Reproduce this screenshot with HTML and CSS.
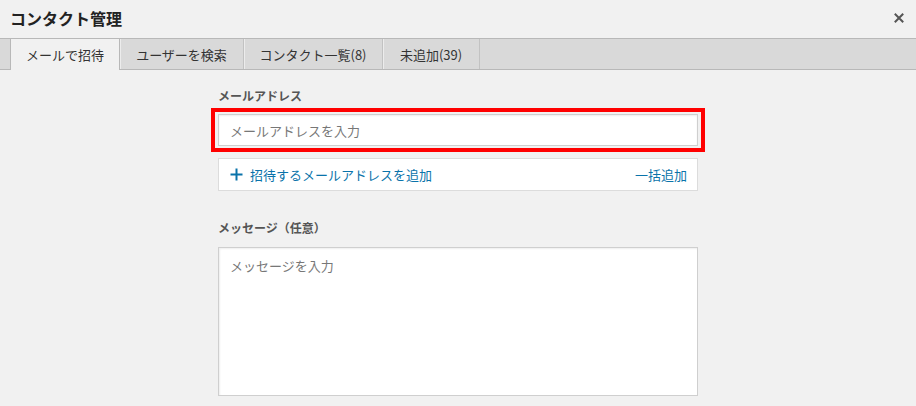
FILE: index.html
```html
<!DOCTYPE html>
<html lang="ja">
<head>
<meta charset="utf-8">
<title>コンタクト管理</title>
<link rel="stylesheet" href="styles.css">
</head>
<body>
<div class="modal">
  <header class="modal-header">
    <h1 class="modal-title">コンタクト管理</h1>
    <button class="close-btn" aria-label="閉じる">
      <svg width="10" height="10" viewBox="0 0 10 10"><path d="M1.5 1.5 L8.5 8.5 M8.5 1.5 L1.5 8.5" stroke="#555" stroke-width="2" stroke-linecap="square"/></svg>
    </button>
  </header>
  <nav class="tabs">
    <div class="tab active">メールで招待</div>
    <div class="tab">ユーザーを検索</div>
    <div class="tab">コンタクト一覧(8)</div>
    <div class="tab">未追加(39)</div>
  </nav>
  <main class="content">
    <div class="form">
      <label class="field-label">メールアドレス</label>
      <div class="highlight">
        <div class="text-input placeholder">メールアドレスを入力</div>
      </div>
      <div class="add-row">
        <span class="add-link">
          <svg class="plus" width="13" height="13" viewBox="0 0 13 13"><path d="M6.5 0.5 V12.5 M0.5 6.5 H12.5" stroke="#0a73aa" stroke-width="2"/></svg>
          招待するメールアドレスを追加
        </span>
        <span class="bulk-link">一括追加</span>
      </div>
      <label class="field-label second">メッセージ（任意）</label>
      <div class="textarea placeholder">メッセージを入力</div>
    </div>
  </main>
</div>
</body>
</html>
```
FILE: styles.css
```css
* { box-sizing: border-box; }
html, body {
  margin: 0;
  padding: 0;
  background: #f1f1f1;
  font-family: "Noto Sans CJK JP", "Noto Sans", sans-serif;
  color: #333;
}
.modal {
  width: 916px;
  height: 406px;
  overflow: hidden;
}
.modal-header {
  height: 38px;
  display: flex;
  align-items: center;
  justify-content: space-between;
  padding: 0 12px 0 10px;
}
.modal-title {
  margin: 0;
  font-size: 16px;
  font-weight: 700;
  color: #222;
  line-height: 20px;
  position: relative;
  top: -1px;
}
.close-btn {
  border: 0;
  background: none;
  padding: 0;
  width: 10px;
  height: 10px;
  display: flex;
  position: relative;
  top: -1px;
}
.tabs {
  display: flex;
  height: 32px;
  background: #d9d9d9;
  border-top: 1px solid #b8b8b8;
  border-bottom: 1px solid #b8b8b8;
  padding-left: 10px;
}
.tab {
  height: 30px;
  display: flex;
  align-items: center;
  padding: 0 16px;
  font-size: 13px;
  color: #333;
  border-right: 1px solid #c2c2c2;
  box-shadow: inset 1px 0 0 #ececec;
}
.tab.active {
  background: #f1f1f1;
  height: 31px;
  border-left: 1px solid #b8b8b8;
  border-right: 1px solid #b8b8b8;
  box-shadow: none;
  position: relative;
  z-index: 1;
}
.tab:nth-child(2) { width: 124px; justify-content: center; padding: 0; }
.tab:nth-child(1) { width: 110px; justify-content: center; padding: 0; }
.tab:nth-child(3) { width: 139px; justify-content: center; padding: 0; }
.tab:nth-child(4) { width: 97px; justify-content: center; padding: 0; }
.content {
  padding-top: 18px;
}
.form {
  width: 480px;
  margin: 0 auto;
  display: flex;
  flex-direction: column;
}
.field-label {
  font-size: 12px;
  font-weight: 700;
  color: #555;
  line-height: 16px;
  margin-bottom: 4px;
}
.field-label.second {
  margin-top: 29px;
  margin-bottom: 11px;
}
.highlight {
  border: 4px solid #ff0000;
  padding: 2px 3px;
  margin: 0 -7px;
}
.text-input {
  height: 32px;
  background: #fff;
  border: 1px solid #cfcfcf;
  box-shadow: inset 0 1px 2px rgba(0,0,0,0.07);
  padding: 0 11px;
  display: flex;
  align-items: center;
  font-size: 13px;
}
.placeholder { color: #777; }
.add-row {
  margin-top: 6px;
  height: 33px;
  background: #fff;
  border: 1px solid #dcdcdc;
  display: flex;
  align-items: center;
  justify-content: space-between;
  padding: 0 10px 0 11px;
  font-size: 13px;
  color: #0a73aa;
}
.add-link {
  display: flex;
  align-items: center;
  gap: 7px;
}
.textarea {
  height: 149px;
  background: #fff;
  border: 1px solid #cfcfcf;
  box-shadow: inset 1px 1px 2px rgba(0,0,0,0.07);
  padding: 9px 11px;
  font-size: 13px;
  line-height: 18px;
}
```
